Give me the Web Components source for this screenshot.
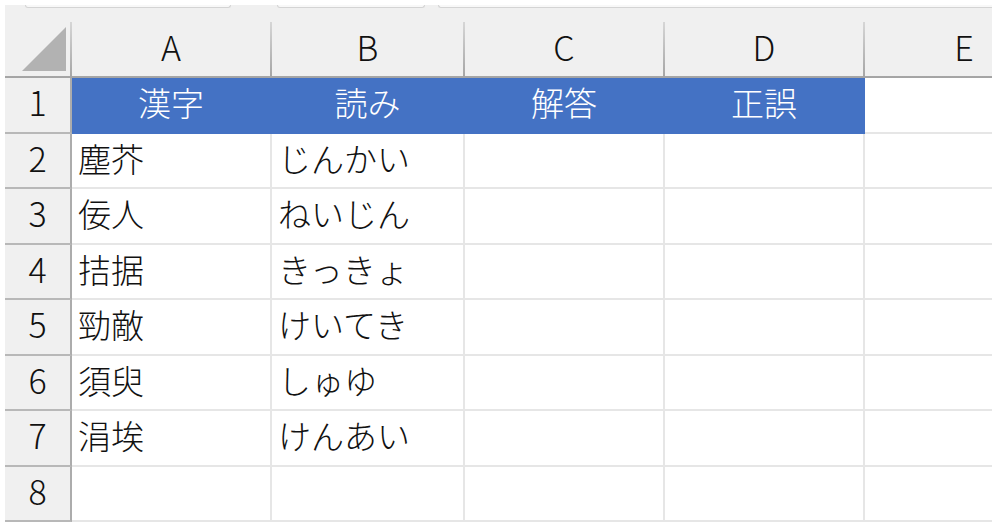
<!DOCTYPE html>
<html lang="ja">
<head>
<meta charset="utf-8">
<meta name="viewport" content="width=device-width, initial-scale=1">
<title>漢字テスト</title>
<style>
body{
    margin: 5px 8px 9px 5px;
    background-color: #fff;
    color: #111;
    font-family: "Noto Sans CJK JP", "Noto Sans", sans-serif;
    font-weight: 300;
}
</style>
</head>
<body>
<my-workbook>
    <my-formula-strip slot=toolbar></my-formula-strip>
    <my-sheet columns="A,B,C,D,E" rows=8>
漢字,読み,解答,正誤
塵芥,じんかい
佞人,ねいじん
拮据,きっきょ
勁敵,けいてき
須臾,しゅゆ
涓埃,けんあい
    </my-sheet>
</my-workbook>

<script>
class Workbook extends HTMLElement{
    constructor(){
        super();

        const shadowRoot = this.attachShadow({mode: 'open'});
        shadowRoot.innerHTML = `
<style>
:host{
    display: block;
    overflow: hidden;
    background-color: #f0f0f0;
}
</style>
<slot name=toolbar></slot>
<slot></slot>
`;
    }
}

customElements.define('my-workbook', Workbook);

// lower edge of the name box, the fx buttons and the formula box
class Formula_Strip extends HTMLElement{
    constructor(){
        super();

        const shadowRoot = this.attachShadow({mode: 'open'});
        shadowRoot.innerHTML = `
<style>
:host{
    display: flex;
    height: 17px;
    align-items: flex-start;
    padding-left: 20px;
}

.box{
    box-sizing: border-box;
    height: 3px;
    border: 1px solid #d4d4d4;
    border-top: 0;
    border-radius: 0 0 4px 4px;
    background-color: #f8f8f8;
}

.name{
    width: 206px;
    margin-right: 46px;
}

.buttons{
    width: 148px;
    margin-right: 13px;
}

.formula{
    flex: 1;
    border-right: 0;
    border-bottom-right-radius: 0;
}
</style>
<div class="box name"></div>
<div class="box buttons"></div>
<div class="box formula"></div>
`;
    }
}

customElements.define('my-formula-strip', Formula_Strip);

class Sheet extends HTMLElement{
    constructor(){
        super();

        this.attachShadow({mode: 'open'}).innerHTML = `
<style>
:host{
    display: block;
}

table{
    table-layout: fixed;
    width: 1060px;
    border-collapse: separate;
    border-spacing: 0;
}

col{
    width: 200px;
}

col.head{
    width: 67px;
}

col.b{
    width: 193px;
}

th, td{
    box-sizing: border-box;
    height: 56px;
    padding: 0 0 6px;
    font-size: 33px;
    line-height: 40px;
    font-weight: inherit;
    white-space: nowrap;
}

tbody tr:nth-child(even) > *{
    height: 55px;
}

thead th{
    padding-bottom: 4px;
    border-right: 2px solid;
    border-bottom: 2px solid;
    border-image: linear-gradient(#d8d8d8, #a4a4a4) 2;
    font-size: 34px;
}

thead th:first-child{
    padding: 0;
}

tbody th{
    border-right: 2px solid #acacac;
    border-bottom: 2px solid #b8b8b8;
    background-color: #f0f0f0;
    font-size: 34px;
}

td{
    border-right: 2px solid #e6e6e6;
    border-bottom: 2px solid #e6e6e6;
    background-color: #fff;
    text-align: left;
    padding-left: 6px;
}

td.title{
    border-color: #4472c4;
    background-color: #4472c4;
    color: #fff;
    text-align: center;
    padding-left: 0;
}

button{
    display: block;
    width: 100%;
    height: 54px;
    padding: 0;
    border: 0;
    background: none;
}

svg{
    display: block;
    margin-left: auto;
    margin-right: 4px;
}
</style>
<table>
    <colgroup></colgroup>
    <thead><tr></tr></thead>
    <tbody></tbody>
</table>
`;
    }

    connectedCallback()
    {
        // one line for each row, cells split by commas
        this.columns = this.getAttribute('columns').split(',');
        this.rows = Number(this.getAttribute('rows'));
        this.data = this.textContent.trim().split('\n').map(line => line.split(','));
        this.render();
    }

    render(){
        const colgroup = this.shadowRoot.querySelector('colgroup');
        const head = this.shadowRoot.querySelector('thead tr');
        const body = this.shadowRoot.querySelector('tbody');

        colgroup.innerHTML = '<col class=head>' +
            this.columns.map(name => `<col class=${name.toLowerCase()}>`).join('');

        head.innerHTML = `
<th><button type=button aria-label="すべて選択">
    <svg width=44 height=44 viewBox="0 0 44 44"><path d="M44 0V44H0Z" fill="#b2b2b2"/></svg>
</button></th>` + this.columns.map(name => `<th scope=col>${name}</th>`).join('');

        body.innerHTML = '';
        for(let i = 0; i < this.rows; i++){
            const cells = this.data[i] || [];
            const row = document.createElement('tr');
            row.innerHTML = `<th scope=row>${i + 1}</th>` + this.columns.map((name, j) => {
                const title = i == 0 && cells[j] ? ' class=title' : '';
                return `<td${title}>${cells[j] || ''}</td>`;
            }).join('');
            body.append(row);
        }
    }
}

customElements.define('my-sheet', Sheet);
</script>
</body>
</html>
